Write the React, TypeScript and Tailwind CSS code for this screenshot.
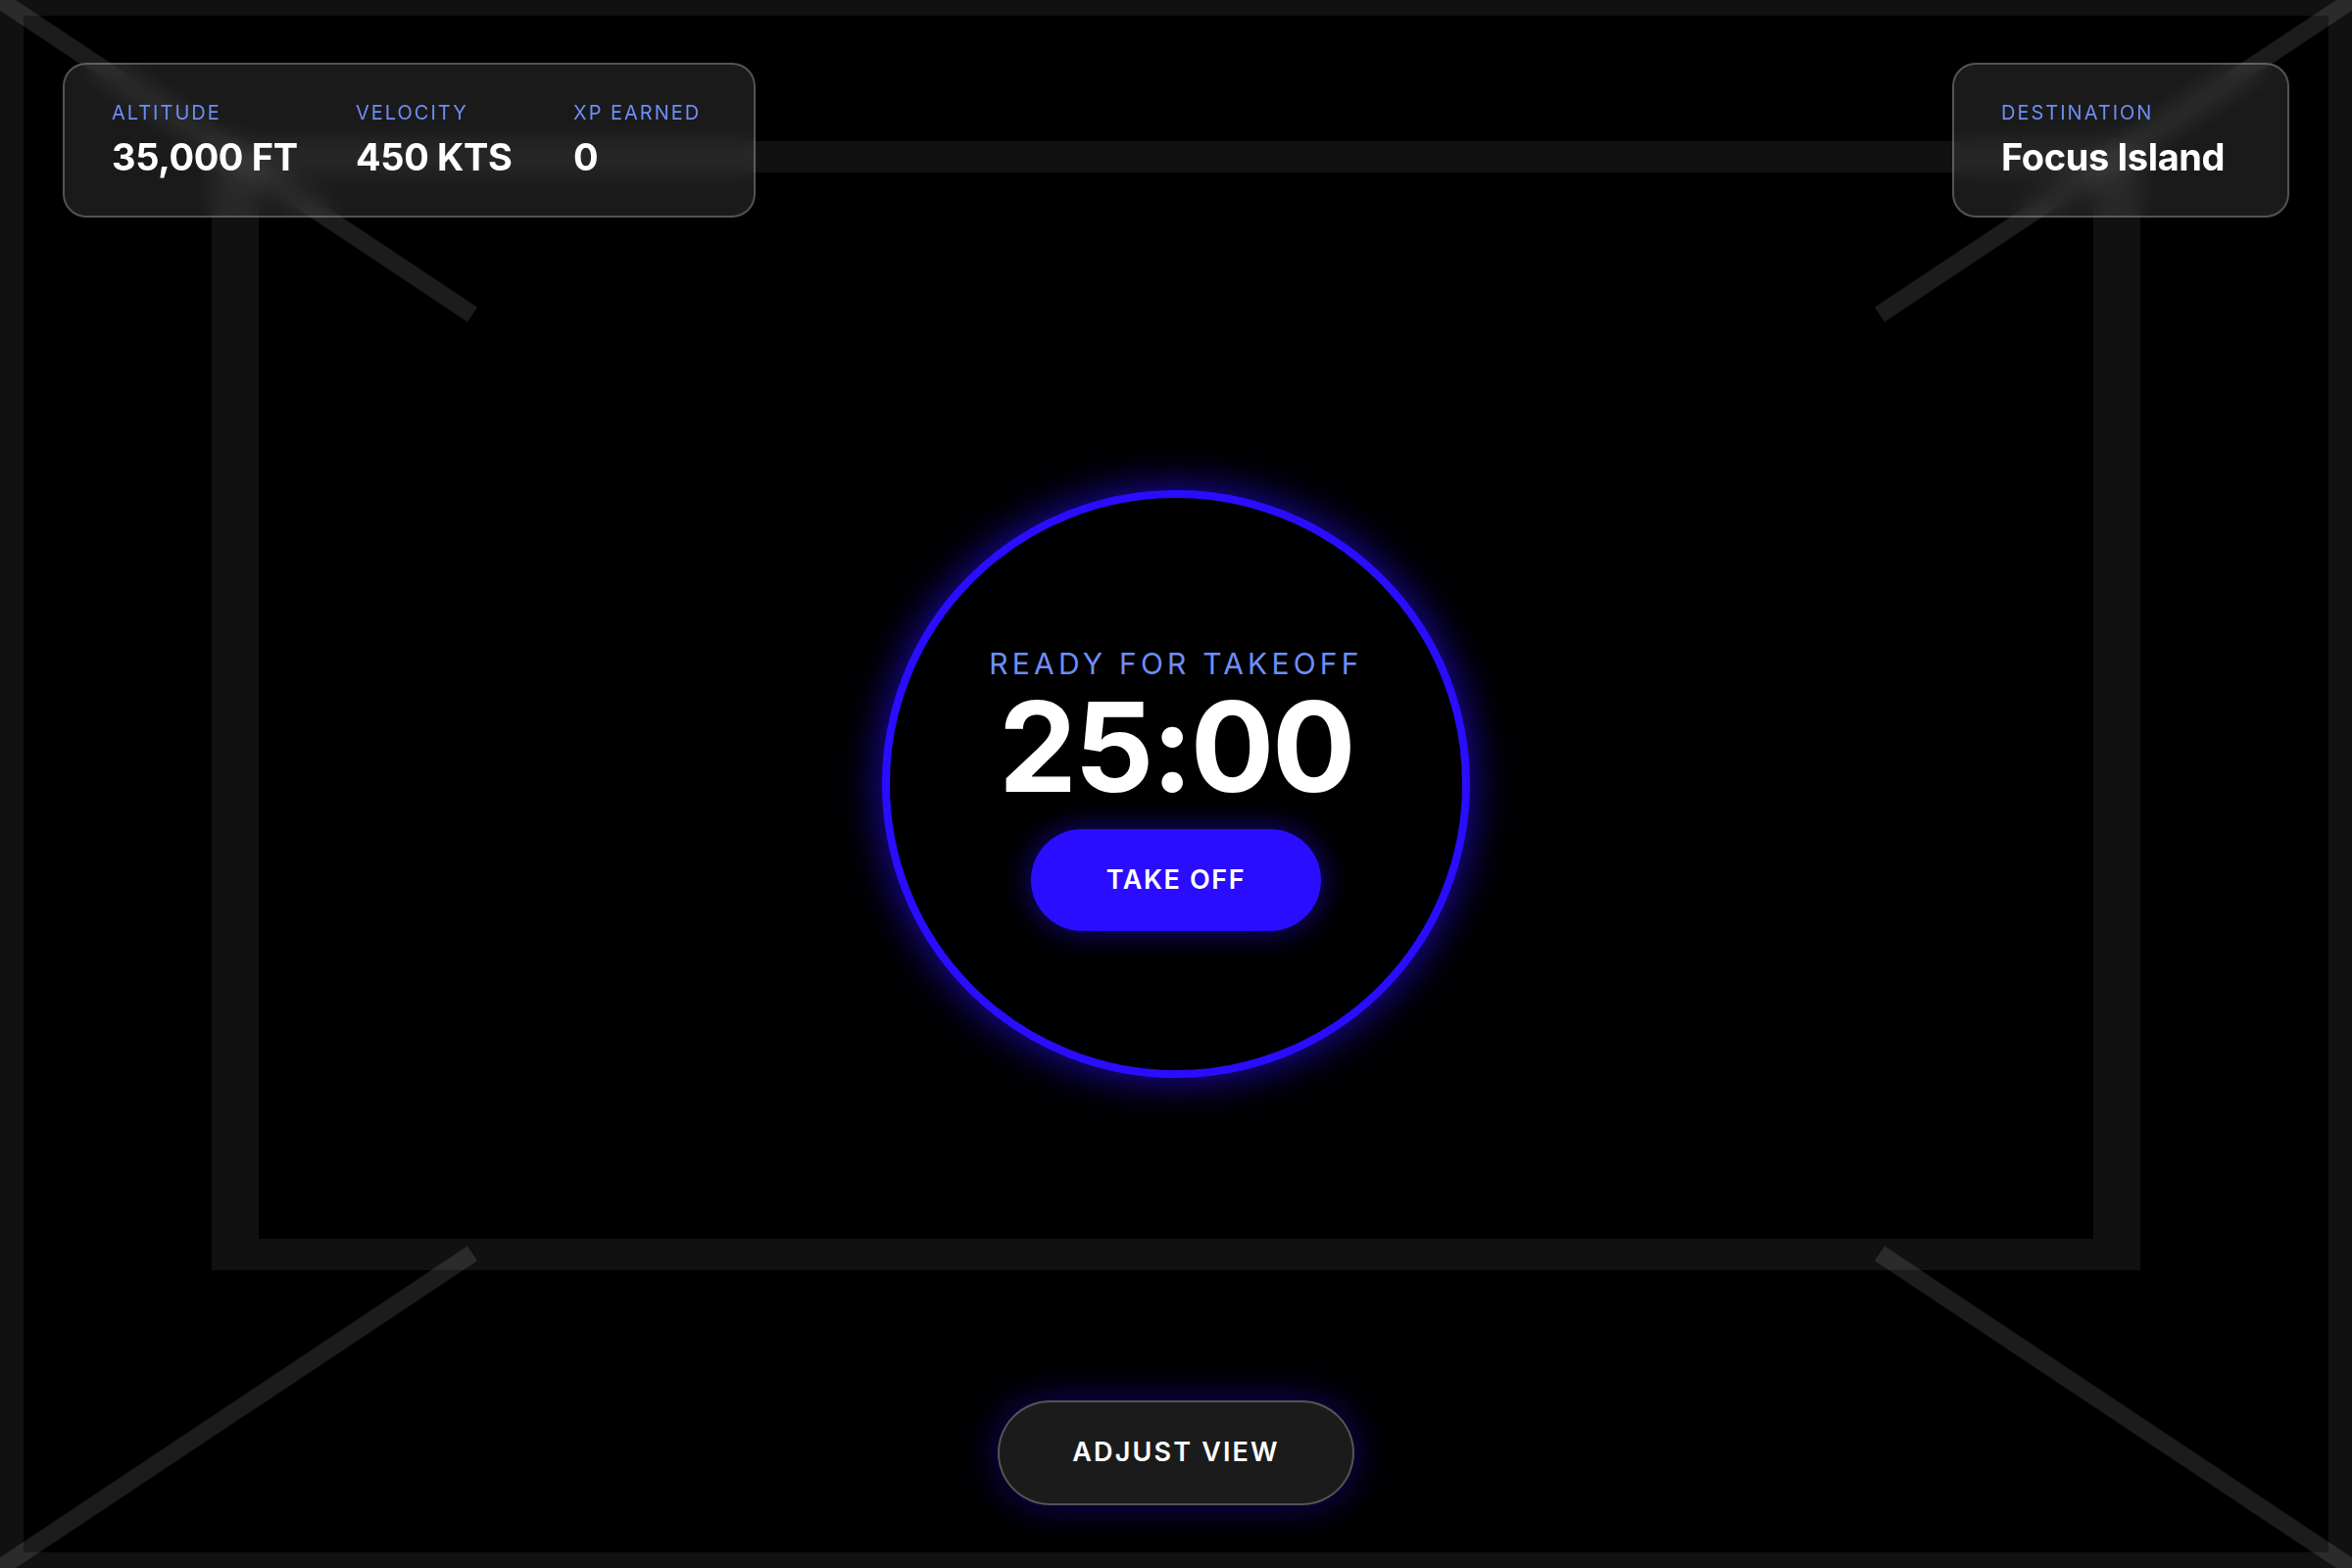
import React from "react";

function Backdrop() {
  return (
    <div className="pointer-events-none absolute inset-0">
      <div className="absolute inset-0 border-x-[24px] border-y-[16px] border-[#111111]" />
      <div className="absolute left-[216px] right-[216px] top-[144px] h-[1152px] border-x-[48px] border-y-[32px] border-[#111111]" />
      <svg className="absolute inset-0" width="2400" height="1600" viewBox="0 0 2400 1600">
        <g stroke="#ffffff" strokeOpacity="0.11" strokeWidth="18" strokeLinecap="butt">
          <line x1="-6" y1="-4" x2="482" y2="321" />
          <line x1="2406" y1="-4" x2="1918" y2="321" />
          <line x1="-6" y1="1604" x2="482" y2="1279" />
          <line x1="2406" y1="1604" x2="1918" y2="1279" />
        </g>
      </svg>
    </div>
  );
}

function Stat({ label, value, width }: { label: string; value: string; width: string }) {
  return (
    <div className={`flex flex-col whitespace-nowrap ${width}`}>
      <span className="text-[20px] leading-none tracking-[0.1em] text-[#6e8ef7]">{label}</span>
      <span className="mt-[16px] text-[38px] font-bold leading-none tracking-[-0.01em] text-white">{value}</span>
    </div>
  );
}

export default function App() {
  return (
    <div className="relative h-[1600px] w-full overflow-hidden bg-black font-['Inter','Noto_Sans',sans-serif]">
      <Backdrop />
      <div className="relative grid h-full grid-cols-1 grid-rows-1 p-16">
        <div className="col-start-1 row-start-1 flex items-start justify-between self-start">
          <div className="flex rounded-[24px] border-2 border-white/25 bg-white/10 pl-12 pr-[50px] pt-[39px] pb-[41px] backdrop-blur-md">
            <Stat label="ALTITUDE" value="35,000 FT" width="w-[249px]" />
            <Stat label="VELOCITY" value="450 KTS" width="w-[222px]" />
            <Stat label="XP EARNED" value="0" width="w-[134px]" />
          </div>
          <div className="flex w-[344px] rounded-[24px] border-2 border-white/25 bg-white/10 px-12 pt-[39px] pb-[41px] backdrop-blur-md">
            <Stat label="DESTINATION" value="Focus Island" width="w-auto" />
          </div>
        </div>

        <div className="col-start-1 row-start-1 flex items-center justify-center self-center justify-self-center">
          <div className="flex h-[600px] w-[600px] flex-col items-center justify-center rounded-full border-8 border-[#2a0dff] bg-black pt-3 shadow-[0_0_44px_rgba(42,13,255,0.75)]">
            <span className="text-[30px] leading-none tracking-[0.14em] text-[#6e8ef7]">READY FOR TAKEOFF</span>
            <span className="mt-[7px] text-[127px] font-bold leading-none tracking-[-0.02em] text-white">25:00</span>
            <button className="mt-[20px] flex h-[104px] w-[296px] items-center justify-center rounded-full bg-[#2a0dff] text-[27px] font-semibold tracking-[0.06em] text-white shadow-[0_0_30px_rgba(42,13,255,0.55)]">
              TAKE OFF
            </button>
          </div>
        </div>

        <div className="col-start-1 row-start-1 flex justify-center self-end">
          <button className="flex h-[107px] w-[364px] items-center justify-center rounded-full border-2 border-white/25 bg-[#1b1b1b] text-[27px] font-semibold tracking-[0.08em] text-white shadow-[0_0_40px_rgba(42,13,255,0.4)]">
            ADJUST VIEW
          </button>
        </div>
      </div>
    </div>
  );
}
